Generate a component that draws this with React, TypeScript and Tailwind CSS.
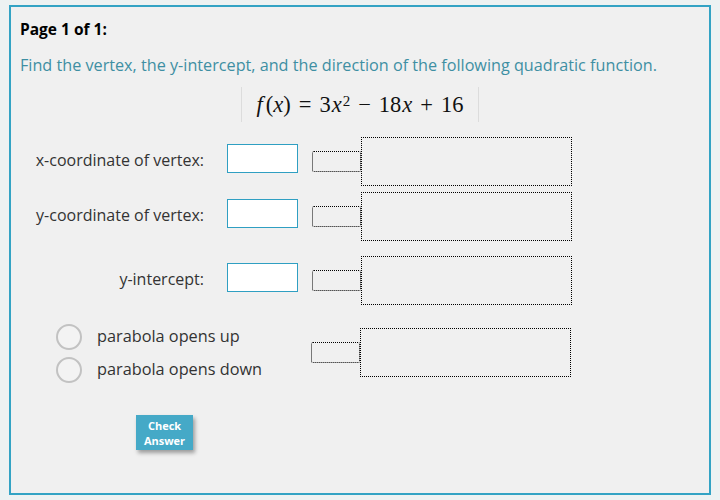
import React from "react";

const Row = ({ label, mb }: { label: string; mb: string }) => (
  <div className={`flex items-start ${mb}`}>
    <div className="w-[184px] mt-[11px] text-right text-[16px] leading-[24px] text-[#333333]">{label}</div>
    <div className="ml-[23px] mt-[7px] w-[71px] h-[29px] bg-white border border-[#2f9fc2]" />
    <div className="ml-[14px] mt-[14px] w-[49px] h-[21px] border border-dotted border-black rounded-[2px]" />
    <div className="w-[211px] h-[49px] border border-dotted border-black" />
  </div>
);

const Radio = ({ label }: { label: string }) => (
  <div className="flex items-center h-[33px]">
    <div className="w-[26px] h-[26px] rounded-full border-[2.5px] border-[#c2c2c2] bg-[#f3f3f3]" />
    <span className="ml-[15px] text-[16.3px] leading-[24px] text-[#333333] -mt-[1px]">{label}</span>
  </div>
);

export default function App() {
  return (
    <div className="w-[720px] h-[500px] bg-[#edf2f2] pt-[5px] pl-[9px]" style={{ fontFamily: '"Open Sans", "Liberation Sans", sans-serif' }}>
      <div className="w-[702px] h-[490px] bg-[#f0f0f0] border-2 border-[#33a3c4] pl-[9px] pt-[10px]">
        <div className="text-[15.5px] leading-[24px] font-bold text-black">Page 1 of 1:</div>
        <div className="mt-[12px] text-[16.2px] leading-[24px] text-[#3e8fa3]">
          Find the vertex, the y-intercept, and the direction of the following quadratic function.
        </div>
        <div className="flex justify-center pr-[9px] mt-[10px]">
          <div
            className="h-[35px] flex items-center px-[14px] border-l border-r border-[#dcdcdc] text-[22.5px] text-[#111]"
            style={{ fontFamily: '"Liberation Serif", "DejaVu Serif", serif' }}
          >
            <span className="italic">f</span>
            <span className="ml-[3px]">(</span>
            <span className="italic">x</span>
            <span>)</span>
            <span className="mx-[8px]">=</span>
            <span>3</span>
            <span className="italic ml-[1px]">x</span>
            <span className="text-[15px] self-start mt-[3px] ml-[1px]">2</span>
            <span className="mx-[8px]">−</span>
            <span>18</span>
            <span className="italic ml-[1px]">x</span>
            <span className="mx-[8px]">+</span>
            <span>16</span>
          </div>
        </div>
        <div className="mt-[15px]">
          <Row label="x-coordinate of vertex:" mb="mb-[6px]" />
          <Row label="y-coordinate of vertex:" mb="mb-[15px]" />
          <Row label="y-intercept:" mb="mb-[15px]" />
          <div className="flex items-start">
            <div className="w-[291px] pl-[36px]">
              <Radio label="parabola opens up" />
              <Radio label="parabola opens down" />
            </div>
            <div className="mt-[22px] w-[49px] h-[21px] border border-dotted border-black rounded-[2px]" />
            <div className="mt-[8px] w-[211px] h-[49px] border border-dotted border-black" />
          </div>
          <div className="ml-[116px] mt-[29px] w-[57px] h-[35px] bg-[#45a9c7] shadow-[2px_3px_4px_rgba(0,0,0,0.35)] flex flex-col items-center justify-center text-white font-bold text-[11px] leading-[15px]">
            <span>Check</span>
            <span>Answer</span>
          </div>
        </div>
      </div>
    </div>
  );
}
